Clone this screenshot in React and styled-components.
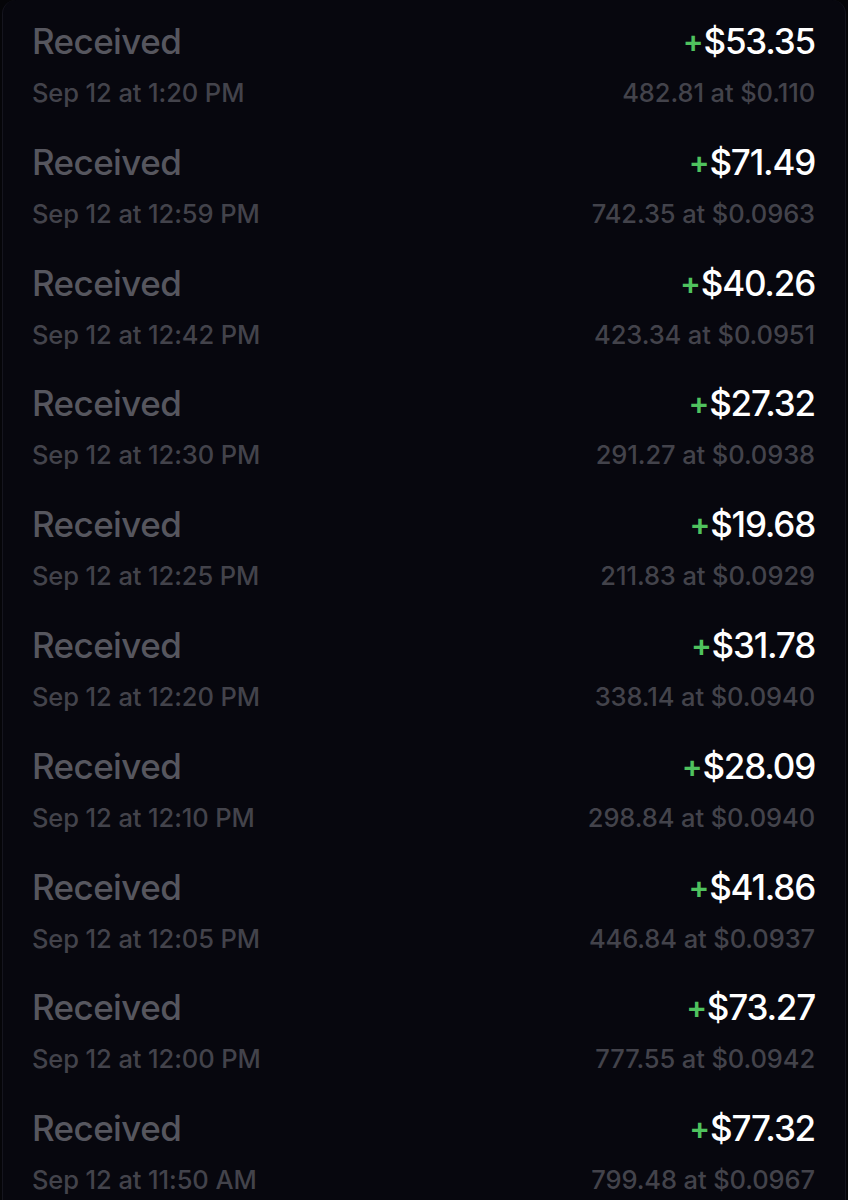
import React from "react";
import styled, { createGlobalStyle } from "styled-components";

const Global = createGlobalStyle`
  html, body { margin: 0; padding: 0; background: #050508; }
  body { font-family: Inter, "Noto Sans", sans-serif; -webkit-font-smoothing: antialiased; }
`;

const Panel = styled.div`
  margin: 0 2px;
  min-height: 1200px;
  background: #07070e;
  border-left: 1px solid #15151e;
  border-right: 1px solid #15151e;
  border-radius: 14px 14px 0 0;
  padding: 0 30px 0 29px;
  box-sizing: border-box;
  overflow: hidden;
`;

const Row = styled.div`
  display: grid;
  grid-template-columns: 1fr auto;
  grid-template-rows: 44px 32px;
  row-gap: 14px;
  padding: 19px 0 11.8px;
`;

const Title = styled.div`
  font-size: 35px;
  line-height: 44px;
  font-weight: 500;
  letter-spacing: ${(p) => (p.$right ? "-1.2px" : "-0.6px")};
  color: ${(p) => (p.$bright ? "#ffffff" : "#56565e")};
  text-align: ${(p) => (p.$right ? "right" : "left")};
  white-space: nowrap;
`;

const Plus = styled.span`
  color: #4fc25e;
  font-size: 31px;
  font-weight: 600;
  margin-right: 1px;
  position: relative;
  top: -2px;
`;

const Sub = styled.div`
  font-size: 25.5px;
  line-height: 32px;
  font-weight: 500;
  letter-spacing: -0.1px;
  color: #43434b;
  text-align: ${(p) => (p.$right ? "right" : "left")};
  white-space: nowrap;
`;

const data = [
  ["53.35", "1:20 PM", "482.81 at $0.110"],
  ["71.49", "12:59 PM", "742.35 at $0.0963"],
  ["40.26", "12:42 PM", "423.34 at $0.0951"],
  ["27.32", "12:30 PM", "291.27 at $0.0938"],
  ["19.68", "12:25 PM", "211.83 at $0.0929"],
  ["31.78", "12:20 PM", "338.14 at $0.0940"],
  ["28.09", "12:10 PM", "298.84 at $0.0940"],
  ["41.86", "12:05 PM", "446.84 at $0.0937"],
  ["73.27", "12:00 PM", "777.55 at $0.0942"],
  ["77.32", "11:50 AM", "799.48 at $0.0967"],
];

export default function App() {
  return (
    <>
      <Global />
      <Panel>
        {data.map(([amt, time, detail]) => (
          <Row key={time}>
            <Title>Received</Title>
            <Title $right $bright>
              <Plus>+</Plus>${amt}
            </Title>
            <Sub>Sep 12 at {time}</Sub>
            <Sub $right>{detail}</Sub>
          </Row>
        ))}
      </Panel>
    </>
  );
}
